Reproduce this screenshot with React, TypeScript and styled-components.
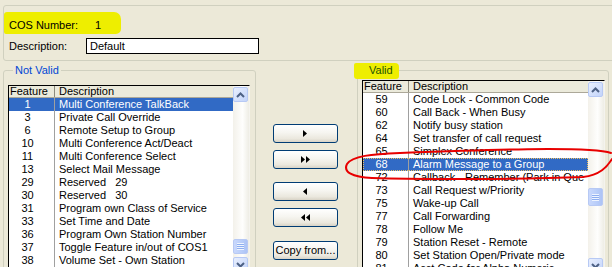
import React from "react";
import styled, { createGlobalStyle } from "styled-components";

const GlobalStyle = createGlobalStyle`
  html, body {
    margin: 0;
    padding: 0;
  }
  body {
    width: 612px;
    height: 267px;
    overflow: hidden;
    background: #ece9d8;
    font-family: "Liberation Sans", Arial, sans-serif;
    font-size: 11px;
    color: #000;
  }
`;

interface Feature {
  id: number;
  name: string;
}

const notValid: Feature[] = [
  { id: 1, name: "Multi Conference TalkBack" },
  { id: 3, name: "Private Call Override" },
  { id: 6, name: "Remote Setup to Group" },
  { id: 10, name: "Multi Conference Act/Deact" },
  { id: 11, name: "Multi Conference Select" },
  { id: 13, name: "Select Mail Message" },
  { id: 29, name: "Reserved   29" },
  { id: 30, name: "Reserved   30" },
  { id: 31, name: "Program own Class of Service" },
  { id: 33, name: "Set Time and Date" },
  { id: 36, name: "Program Own Station Number" },
  { id: 37, name: "Toggle Feature in/out of COS1" },
  { id: 38, name: "Volume Set - Own Station" },
];

const valid: Feature[] = [
  { id: 59, name: "Code Lock - Common Code" },
  { id: 60, name: "Call Back - When Busy" },
  { id: 62, name: "Notify busy station" },
  { id: 64, name: "Set transfer of call request" },
  { id: 65, name: "Simplex Conference" },
  { id: 68, name: "Alarm Message to a Group" },
  { id: 72, name: "Callback - Remember (Park in Que" },
  { id: 73, name: "Call Request w/Priority" },
  { id: 75, name: "Wake-up Call" },
  { id: 77, name: "Call Forwarding" },
  { id: 78, name: "Follow Me" },
  { id: 79, name: "Station Reset - Remote" },
  { id: 80, name: "Set Station Open/Private mode" },
  { id: 81, name: "Acct Code for Alpha Numeric" },
];

const Window = styled.div`
  position: relative;
  box-sizing: border-box;
  width: 612px;
  height: 267px;
  overflow: hidden;
  padding: 5px 0 0 3px;
`;

const TopGroup = styled.div`
  box-sizing: border-box;
  width: 640px;
  height: 56px;
  border: 1px solid #d0d0bf;
  border-radius: 3px;
  padding-top: 6px;
`;

const CosHighlight = styled.div`
  display: flex;
  width: fit-content;
  padding: 7px 20px 2px 5px;
  line-height: 13px;
  background: #eeee00;
  border-radius: 3px 7px 5px 2px;
`;

const CosLabel = styled.span`
  width: 86px;
`;

const DescRow = styled.div`
  display: flex;
  align-items: center;
  margin-top: 4px;
  padding-left: 5px;
`;

const DescLabel = styled.span`
  width: 77px;
  line-height: 13px;
`;

const TextBox = styled.div`
  box-sizing: border-box;
  width: 173px;
  height: 16px;
  border: 1px solid #000;
  background: #fff;
  padding-left: 3px;
  line-height: 14px;
`;

const Lower = styled.div`
  display: flex;
  align-items: flex-start;
  margin-top: 3px;
`;

const GroupBox = styled.fieldset<{ $width: number }>`
  box-sizing: border-box;
  width: ${({ $width }) => $width}px;
  height: 220px;
  min-width: 0;
  margin: 0;
  padding: 0 0 0 4px;
  border: 1px solid #d0d0bf;
  border-radius: 3px;
`;

const Legend = styled.legend<{ $color: string }>`
  margin-left: 5px;
  padding: 0 2px;
  line-height: 13px;
  color: ${({ $color }) => $color};
`;

const Marker = styled.span`
  background: #eeee00;
  padding: 1px 6px 3px 15px;
  margin: 0 -6px 0 -15px;
  border-radius: 2px 4px 3px 3px;
`;

const ListView = styled.div<{ $top: number; $width: number; $height: number }>`
  box-sizing: border-box;
  display: flex;
  margin-top: ${({ $top }) => $top}px;
  width: ${({ $width }) => $width}px;
  height: ${({ $height }) => $height}px;
  border-top: 1px solid #000;
  border-left: 1px solid #000;
  border-right: 1px solid #f4f3ee;
  background: #fff;
`;

const Table = styled.div`
  flex: 1;
  min-width: 0;
  overflow: hidden;
`;

const HeaderRow = styled.div`
  display: flex;
  box-sizing: border-box;
  height: 12px;
  line-height: 11px;
  background: #ebeadb;
  border-bottom: 1px solid #aca899;
`;

const Row = styled.div<{ $selected?: boolean; $focused?: boolean }>`
  display: flex;
  height: 13px;
  line-height: 13px;
  white-space: pre;
  background: ${({ $selected }) => ($selected ? "#316ac5" : "#fff")};
  color: ${({ $selected }) => ($selected ? "#fff" : "#000")};
  outline: ${({ $focused }) => ($focused ? "1px dotted #f0c060" : "none")};
  outline-offset: -1px;
`;

const FeatureCell = styled.div<{ $header?: boolean }>`
  box-sizing: border-box;
  flex: none;
  width: 46px;
  padding: ${({ $header }) => ($header ? "0 0 0 1px" : "0 8px 0 0")};
  text-align: ${({ $header }) => ($header ? "left" : "center")};
  border-right: 1px solid ${({ $header }) => ($header ? "#8c8a7c" : "#a0a0a0")};
`;

const DescCell = styled.div`
  flex: 1;
  min-width: 0;
  padding-left: 4px;
  overflow: hidden;
`;

const ScrollBar = styled.div`
  flex: none;
  display: flex;
  flex-direction: column;
  width: 16px;
  background: linear-gradient(to right, #f3f1ea, #fefefd 60%, #eeede5);
`;

const ScrollButton = styled.div<{ $down?: boolean }>`
  box-sizing: border-box;
  width: 15px;
  height: 15px;
  margin: ${({ $down }) => ($down ? "0 0 1px 0" : "1px 0 0 0")};
  border: 1px solid #b7c9f4;
  border-radius: 2px;
  background: linear-gradient(135deg, #e8effe, #c3d4fa);
  display: flex;
  align-items: center;
  justify-content: center;
`;

const Track = styled.div`
  flex: 1;
`;

const Thumb = styled.div<{ $offset: number; $size: number }>`
  box-sizing: border-box;
  width: 15px;
  height: ${({ $size }) => $size}px;
  margin-top: ${({ $offset }) => $offset}px;
  border: 1px solid #b7c9f4;
  border-radius: 2px;
  background: linear-gradient(to right, #c9d8fc, #b8cdf9 60%, #adc3f5);
  display: flex;
  align-items: center;
  justify-content: center;
`;

const Grip = styled.span`
  width: 7px;
  height: 7px;
  background: repeating-linear-gradient(to bottom, #eef4ff 0 1px, #8eaef0 1px 2px);
`;

const Middle = styled.div`
  box-sizing: border-box;
  width: 101px;
  display: flex;
  flex-direction: column;
  align-items: flex-start;
  padding: 60px 0 0 17px;
`;

const Button = styled.div<{ $gap: number }>`
  box-sizing: border-box;
  width: 65px;
  height: 19px;
  margin-top: ${({ $gap }) => $gap}px;
  border: 1px solid #003c74;
  border-radius: 3px;
  background: linear-gradient(to bottom, #ffffff 0%, #f6f5f0 45%, #ebe8de 80%, #d8d3c6 100%);
  display: flex;
  align-items: center;
  justify-content: center;
  line-height: 13px;
`;

const Annotation = styled.svg`
  position: absolute;
  left: 0;
  top: 0;
  pointer-events: none;
`;

const Arrow: React.FC<{ dir: "left" | "right"; count: number }> = ({ dir, count }) => {
  const w = count * 5;
  const tri = (x: number) =>
    dir === "right" ? `${x},0 ${x + 4},3.5 ${x},7` : `${x + 4},0 ${x},3.5 ${x + 4},7`;
  return (
    <svg width={w} height={7} viewBox={`0 0 ${w} 7`}>
      {Array.from({ length: count }).map((_, i) => (
        <polygon key={i} points={tri(i * 5)} fill="#000" />
      ))}
    </svg>
  );
};

const Chevron: React.FC<{ down?: boolean }> = ({ down }) => (
  <svg width={9} height={6} viewBox="0 0 9 6">
    <polyline
      points={down ? "1,1 4.5,4.5 8,1" : "1,5 4.5,1.5 8,5"}
      fill="none"
      stroke="#4d6185"
      strokeWidth={2}
    />
  </svg>
);

interface FeatureListProps {
  rows: Feature[];
  selected: number;
  focused?: boolean;
  top: number;
  width: number;
  height: number;
  thumbOffset: number;
  thumbSize: number;
}

const FeatureList: React.FC<FeatureListProps> = ({
  rows,
  selected,
  focused,
  top,
  width,
  height,
  thumbOffset,
  thumbSize,
}) => (
  <ListView $top={top} $width={width} $height={height}>
    <Table>
      <HeaderRow>
        <FeatureCell $header>Feature</FeatureCell>
        <DescCell>Description</DescCell>
      </HeaderRow>
      {rows.map((r) => (
        <Row key={r.id} $selected={r.id === selected} $focused={focused && r.id === selected}>
          <FeatureCell>{r.id}</FeatureCell>
          <DescCell>{r.name}</DescCell>
        </Row>
      ))}
    </Table>
    <ScrollBar>
      <ScrollButton>
        <Chevron />
      </ScrollButton>
      <Track>
        <Thumb $offset={thumbOffset} $size={thumbSize}>
          <Grip />
        </Thumb>
      </Track>
      <ScrollButton $down>
        <Chevron down />
      </ScrollButton>
    </ScrollBar>
  </ListView>
);

const App: React.FC = () => (
  <Window>
    <GlobalStyle />
    <TopGroup>
      <CosHighlight>
        <CosLabel>COS Number:</CosLabel>
        <span>1</span>
      </CosHighlight>
      <DescRow>
        <DescLabel>Description:</DescLabel>
        <TextBox>Default</TextBox>
      </DescRow>
    </TopGroup>

    <Lower>
      <GroupBox $width={253}>
        <Legend $color="#0046d5">Not Valid</Legend>
        <FeatureList
          rows={notValid}
          selected={1}
          top={8}
          width={242}
          height={188}
          thumbOffset={137}
          thumbSize={15}
        />
      </GroupBox>

      <Middle>
        <Button $gap={0}>
          <Arrow dir="right" count={1} />
        </Button>
        <Button $gap={7}>
          <Arrow dir="right" count={2} />
        </Button>
        <Button $gap={13}>
          <Arrow dir="left" count={1} />
        </Button>
        <Button $gap={7}>
          <Arrow dir="left" count={2} />
        </Button>
        <Button $gap={14}>Copy from...</Button>
      </Middle>

      <GroupBox $width={252}>
        <Legend $color="#1f5200">
          <Marker>Valid</Marker>
        </Legend>
        <FeatureList
          rows={valid}
          selected={68}
          focused
          top={3}
          width={243}
          height={194}
          thumbOffset={91}
          thumbSize={18}
        />
      </GroupBox>
    </Lower>

    <Annotation width={612} height={267} viewBox="0 0 612 267">
      <path
        d="M 611 153 C 590 146, 480 150, 400 153 C 372 154, 352 156, 347 164 C 343 172, 352 177, 372 178 C 430 180, 530 179, 583 177 C 600 175, 607 167, 612 159"
        fill="none"
        stroke="#e80000"
        strokeWidth={2}
        strokeLinecap="round"
      />
    </Annotation>
  </Window>
);

export default App;
